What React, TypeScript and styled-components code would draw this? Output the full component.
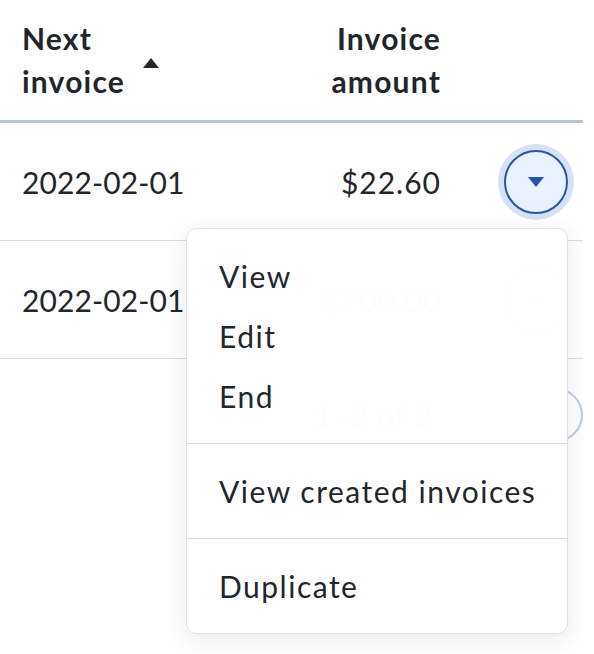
import React from "react";
import styled, { createGlobalStyle } from "styled-components";

const Global = createGlobalStyle`
  html, body { margin: 0; padding: 0; background: #ffffff; }
  body { font-family: Lato, "Open Sans", sans-serif; color: #1f262e; }
`;

const Page = styled.div`
  position: relative;
  width: 583px;
  height: 654px;
  overflow: hidden;
`;

const Table = styled.div`
  display: grid;
  grid-template-columns: 1fr 220px 142px;
`;

const HeadCell = styled.div<{ $align?: "left" | "right" }>`
  height: 120px;
  display: flex;
  align-items: center;
  justify-content: ${(p) => (p.$align === "right" ? "flex-end" : "flex-start")};
  padding-left: ${(p) => (p.$align === "right" ? "0" : "22px")};
  border-bottom: 3px solid #b7c3cd;
  gap: 18px;
`;

const HeadLabel = styled.div<{ $align?: "left" | "right" }>`
  font-size: 30px;
  font-weight: 700;
  line-height: 43px;
  letter-spacing: 1.2px;
  text-align: ${(p) => p.$align ?? "left"};
  color: #1f262e;
`;

const SortArrow = styled.span`
  width: 0;
  height: 0;
  border-left: 8px solid transparent;
  border-right: 8px solid transparent;
  border-bottom: 10px solid #1f262e;
  margin-top: 6px;
`;

const Cell = styled.div<{ $align?: "left" | "right" }>`
  height: 117px;
  display: flex;
  align-items: center;
  justify-content: ${(p) => (p.$align === "right" ? "flex-end" : "flex-start")};
  padding-left: ${(p) => (p.$align === "right" ? "0" : "22px")};
  border-bottom: 1.5px solid #d6dce1;
  font-size: 30px;
  letter-spacing: ${(p) => (p.$align === "right" ? "1px" : "0.1px")};
  color: #1f262e;
`;

const ActionCell = styled(Cell)`
  justify-content: flex-end;
  padding-right: 15px;
`;

const MenuButton = styled.button<{ $focused?: boolean }>`
  width: 64px;
  height: 64px;
  border-radius: 50%;
  border: 2px solid #2657a7;
  background: ${(p) => (p.$focused ? "#e8f1fd" : "#ffffff")};
  box-shadow: ${(p) => (p.$focused ? "0 0 0 6px #d6e2f4" : "none")};
  display: flex;
  align-items: center;
  justify-content: center;
  padding: 0;
  &::after {
    content: "";
    width: 0;
    height: 0;
    border-left: 8px solid transparent;
    border-right: 8px solid transparent;
    border-top: 10px solid #2657a7;
    margin-top: 1px;
  }
`;

const Pager = styled.div`
  display: flex;
  align-items: center;
  justify-content: flex-end;
  height: 112px;
  font-size: 30px;
  letter-spacing: 1px;
  color: #1f262e;
`;

const PagerText = styled.span`
  margin-right: 30px;
`;

const PagerButton = styled.button`
  width: 54px;
  height: 54px;
  border-radius: 50%;
  border: 2px solid #b8caec;
  background: #ffffff;
  margin-left: 6px;
  padding: 0;
`;

const Menu = styled.div`
  position: absolute;
  top: 228px;
  left: 186px;
  width: 382px;
  box-sizing: border-box;
  background: rgba(255, 255, 255, 0.992);
  border: 1.5px solid #dde2e7;
  border-radius: 10px;
  box-shadow: 0 6px 22px rgba(30, 45, 60, 0.1);
`;

const MenuGroup = styled.div`
  padding: 17px 0 17px;
  & + & {
    border-top: 1.5px solid #d6dce3;
  }
`;

const MenuItem = styled.div`
  height: 60px;
  display: flex;
  align-items: center;
  padding-left: 32px;
  font-size: 30px;
  letter-spacing: 1.5px;
  color: #1f262e;
`;

export default function App() {
  const rows = [
    { date: "2022-02-01", amount: "$22.60", focused: true },
    { date: "2022-02-01", amount: "$700.00", focused: false },
  ];
  return (
    <Page>
      <Global />
      <Table>
        <HeadCell>
          <HeadLabel>
            Next
            <br />
            invoice
          </HeadLabel>
          <SortArrow />
        </HeadCell>
        <HeadCell $align="right">
          <HeadLabel $align="right">
            Invoice
            <br />
            amount
          </HeadLabel>
        </HeadCell>
        <HeadCell $align="right" />
        {rows.map((r, i) => (
          <React.Fragment key={i}>
            <Cell>{r.date}</Cell>
            <Cell $align="right">{r.amount}</Cell>
            <ActionCell>
              <MenuButton $focused={r.focused} aria-label="Actions" />
            </ActionCell>
          </React.Fragment>
        ))}
      </Table>
      <Pager>
        <PagerText>1–2 of 2</PagerText>
        <PagerButton aria-label="Previous page" />
        <PagerButton aria-label="Next page" />
      </Pager>
      <Menu>
        <MenuGroup>
          <MenuItem>View</MenuItem>
          <MenuItem>Edit</MenuItem>
          <MenuItem>End</MenuItem>
        </MenuGroup>
        <MenuGroup>
          <MenuItem>View created invoices</MenuItem>
        </MenuGroup>
        <MenuGroup>
          <MenuItem>Duplicate</MenuItem>
        </MenuGroup>
      </Menu>
    </Page>
  );
}
